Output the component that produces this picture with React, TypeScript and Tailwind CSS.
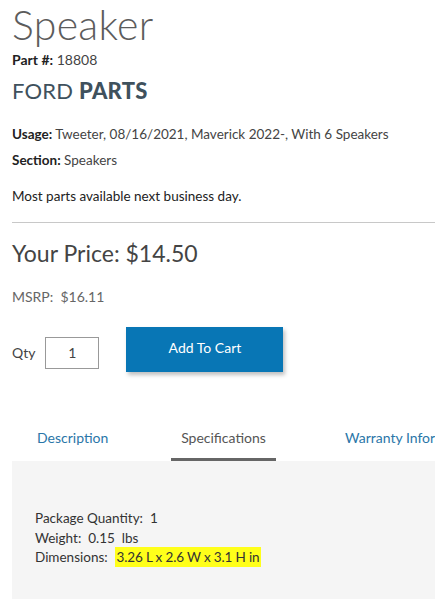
import React from "react";

export default function App() {
  return (
    <div className="w-[435px] h-[614px] overflow-hidden bg-white text-[#3a3a3a]" style={{ fontFamily: "Lato, 'Open Sans', sans-serif" }}>
      <div className="pl-3">
        <h1 className="pt-[3px] text-[41px] leading-[44px] font-light text-[#5c5c5c] tracking-[0.3px]">Speaker</h1>
        <div className="mt-[4px] text-[14px] leading-[18px] text-[#444]">
          <span className="font-bold text-[#222]">Part #:</span> <span>18808</span>
        </div>
        <div className="mt-[10px] text-[22px] leading-[24px] text-[#3f515d] tracking-[0.2px]">
          <span>FORD</span> <span className="font-black">PARTS</span>
        </div>
        <div className="mt-[22px] text-[13.5px] leading-[18px] text-[#444]">
          <span className="font-bold text-[#222]">Usage:</span> Tweeter, 08/16/2021, Maverick 2022-, With 6 Speakers
        </div>
        <div className="mt-[8px] text-[13.5px] leading-[18px] text-[#444]">
          <span className="font-bold text-[#222]">Section:</span> Speakers
        </div>
        <div className="mt-[18px] text-[13.5px] leading-[18px] text-[#222]">Most parts available next business day.</div>
        <div className="mt-[17px] h-px bg-[#c8c8c8]"></div>
        <div className="mt-[16px] text-[23px] leading-[28px] text-[#444]">Your Price: $14.50</div>
        <div className="mt-[22px] text-[14px] leading-[16px] text-[#666]">MSRP:&nbsp; $16.11</div>
        <div className="mt-[22px] flex items-center">
          <span className="text-[14px] text-[#444] mt-[6px]">Qty</span>
          <div className="ml-[10px] mt-[6px] w-[54px] h-[32px] border border-[#999] flex items-center justify-center text-[14px] text-[#444]">1</div>
          <button className="ml-[27px] w-[157px] h-[45px] bg-[#0876b5] text-white text-[14px] pb-[4px] shadow-[2px_3px_4px_rgba(0,0,0,0.25)]">Add To Cart</button>
        </div>
        <div className="mt-[57px] flex text-[14px] leading-[18px]">
          <div className="w-[159px] shrink-0 pl-[25px] text-[#2a76a8]">Description</div>
          <div className="w-[105px] shrink-0 flex flex-col items-center text-[#555]">
            <span className="whitespace-nowrap">Specifications</span>
            <div className="mt-[11px] w-full h-[3px] bg-[#666]"></div>
          </div>
          <div className="ml-[69px] shrink-0 text-[#2a76a8] whitespace-nowrap">Warranty Information</div>
        </div>
        <div className="h-[138px] bg-[#f5f5f5] pl-[23px] pt-[48px] text-[13.5px] leading-[19.5px] text-[#333]">
          <div>Package Quantity:&nbsp; 1</div>
          <div>Weight:&nbsp; 0.15 &nbsp;lbs</div>
          <div>Dimensions:&nbsp; <span className="bg-[#ffff1a] px-[2px] py-[2px] tracking-[-0.15px]">3.26 L x 2.6 W x 3.1 H in</span></div>
        </div>
      </div>
    </div>
  );
}
